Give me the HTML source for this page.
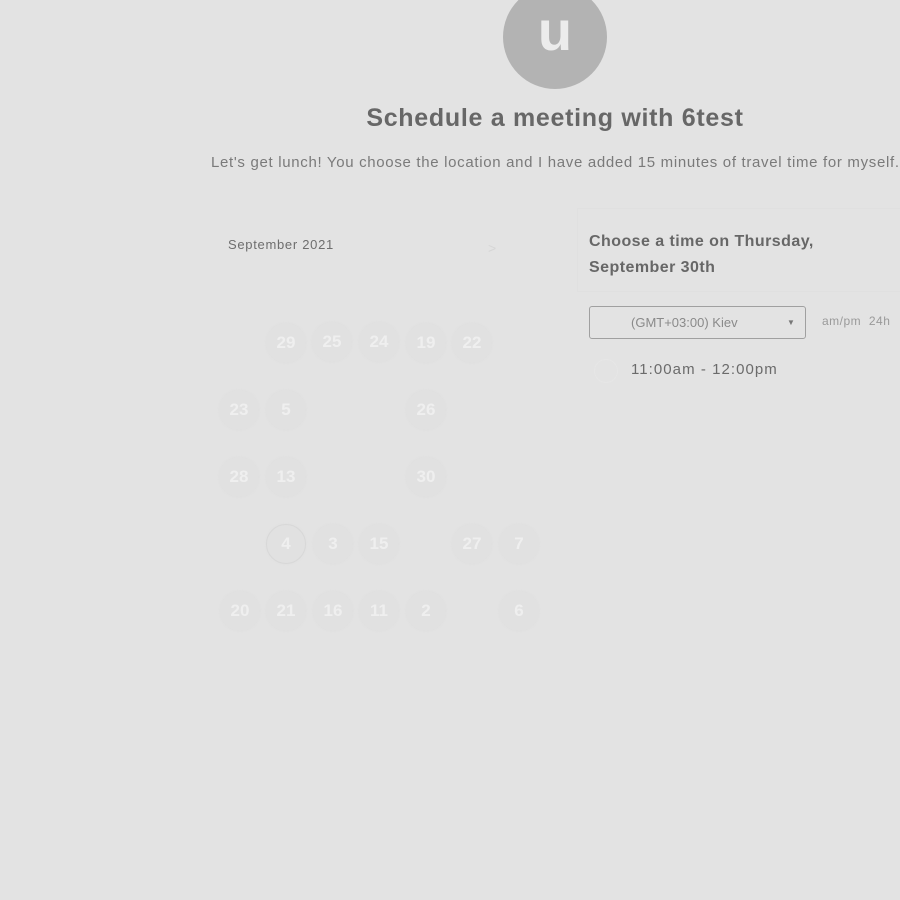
<!DOCTYPE html>
<html><head><meta charset="utf-8"><style>
html,body{margin:0;padding:0;background:#e3e3e3;width:900px;height:900px;overflow:hidden;font-family:"Liberation Sans",sans-serif;position:relative}
.a{position:absolute}
.av{left:503px;top:-15px;width:104px;height:104px;border-radius:50%;background:#b3b3b3;color:#ececec;font-size:56px;font-weight:bold;text-align:center;line-height:92px}
.t{left:0;width:1110px;top:104px;text-align:center;font-size:25px;letter-spacing:0.7px;font-weight:bold;color:#676767}
.s{left:211px;top:154px;font-size:15px;color:#7a7a7a;white-space:nowrap;letter-spacing:0.68px}
.m{left:228px;top:237px;font-size:13px;color:#6e6e6e;letter-spacing:0.7px}
.d{width:40px;height:40px;border-radius:50%;background:#e1e1e1;color:#efefef;font-size:17px;font-weight:bold;text-align:center;line-height:40px;box-shadow:0 0 2px #ddd}
.p{left:577px;top:208px;width:330px;height:84px;border:1px solid #e0e0e0;box-sizing:border-box}
.h{left:589px;top:229px;font-size:16px;font-weight:bold;color:#676767;line-height:26px;letter-spacing:0.45px}
.sel{left:589px;top:306px;width:217px;height:33px;border:1px solid #a0a0a0;border-radius:3px;box-sizing:border-box;font-size:13px;color:#8a8a8a;line-height:31px}
.tm{left:631px;top:361px;font-size:15px;color:#6b6b6b;letter-spacing:1.05px}
</style></head><body>
<div class="a av">u</div>
<div class="a t">Schedule a meeting with 6test</div>
<div class="a s">Let's get lunch! You choose the location and I have added 15 minutes of travel time for myself.</div>
<div class="a m">September 2021</div>
<div class="a" style="left:488px;top:240px;color:#d6d6d6;font-size:14px">&gt;</div>

<div class="a d" style="left:266px;top:323px">29</div>
<div class="a d" style="left:312px;top:322px">25</div>
<div class="a d" style="left:359px;top:322px">24</div>
<div class="a d" style="left:406px;top:323px">19</div>
<div class="a d" style="left:452px;top:323px">22</div>

<div class="a d" style="left:219px;top:390px">23</div>
<div class="a d" style="left:266px;top:390px">5</div>
<div class="a d" style="left:406px;top:390px">26</div>

<div class="a d" style="left:219px;top:457px">28</div>
<div class="a d" style="left:266px;top:457px">13</div>
<div class="a d" style="left:406px;top:457px">30</div>

<div class="a d" style="left:266px;top:524px;border:1px solid #d8d8d8;box-sizing:border-box;line-height:38px">4</div>
<div class="a d" style="left:313px;top:524px">3</div>
<div class="a d" style="left:359px;top:524px">15</div>
<div class="a d" style="left:452px;top:524px">27</div>
<div class="a d" style="left:499px;top:524px">7</div>

<div class="a d" style="left:220px;top:591px">20</div>
<div class="a d" style="left:266px;top:591px">21</div>
<div class="a d" style="left:313px;top:591px">16</div>
<div class="a d" style="left:359px;top:591px">11</div>
<div class="a d" style="left:406px;top:591px">2</div>
<div class="a d" style="left:499px;top:591px">6</div>

<div class="a p"></div>
<div class="a h">Choose a time on Thursday,<br>September 30th</div>
<div class="a sel"><span style="position:absolute;left:41px">(GMT+03:00) Kiev</span><span style="position:absolute;left:197px;font-size:8px;color:#777">&#9660;</span></div>
<div class="a" style="left:822px;top:314px;font-size:12px;color:#9a9a9a;letter-spacing:0.5px">am/pm&nbsp; 24h</div>
<div class="a" style="left:594px;top:359px;width:22px;height:22px;border-radius:50%;border:1px solid #e6e6e6"></div>
<div class="a tm">11:00am - 12:00pm</div>
</body></html>
